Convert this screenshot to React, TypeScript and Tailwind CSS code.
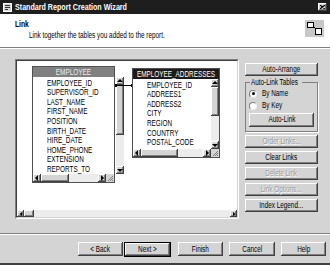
import type { ReactNode } from "react";

const raised =
  "shadow-[inset_-1px_-1px_#404040,inset_1px_1px_#ffffff,inset_-2px_-2px_#808080]";

// the screenshot's system font is narrow, so text is squeezed horizontally
const T = ({ children, left }: { children: ReactNode; left?: boolean }) => (
  <span
    className={`inline-block whitespace-nowrap scale-x-75 ${left ? "origin-left" : "origin-center"}`}
  >
    {children}
  </span>
);

const Arrow = ({ dir }: { dir: "up" | "down" | "left" | "right" }) => {
  const pts =
    dir === "up"
      ? "1,5 4,2 7,5"
      : dir === "down"
      ? "1,3 4,6 7,3"
      : dir === "left"
      ? "5,1 2,4 5,7"
      : "3,1 6,4 3,7";
  return (
    <svg width="8" height="8" viewBox="0 0 8 8">
      <polygon points={pts} fill="#000" />
    </svg>
  );
};

const SBtn = ({ dir }: { dir: "up" | "down" | "left" | "right" }) => (
  <div className={`w-[8px] h-[8px] shrink-0 bg-[#d4d4d4] flex items-center justify-center ${raised}`}>
    <Arrow dir={dir} />
  </div>
);

const Btn = ({
  label,
  disabled,
  className = "",
}: {
  label: string;
  disabled?: boolean;
  className?: string;
}) => (
  <div
    className={`h-[13px] bg-[#d4d4d4] flex items-center justify-center text-[8.5px] leading-none ${raised} ${
      disabled ? "text-[#9a9a9a] [text-shadow:1px_1px_0_#ffffff]" : "text-black"
    } ${className}`}
  >
    <T>{label}</T>
  </div>
);

const TableBox = ({
  title,
  fields,
  dark,
  thumbH,
  hThumbW,
  className,
}: {
  title: string;
  fields: string[];
  dark?: boolean;
  thumbH: number;
  hThumbW: number;
  className: string;
}) => (
  <div className={`absolute flex flex-col border border-[#505050] bg-white ${className}`}>
    <div
      className={`h-[10px] shrink-0 flex items-center justify-center text-[8.5px] leading-none ${
        dark ? "bg-[#1c1c1c] text-white" : "bg-[#808080] text-[#eeeeee]"
      }`}
    >
      <T>{title}</T>
    </div>
    <div className="flex-1 flex min-h-0">
      <div className="flex-1 flex flex-col pl-[14px] pt-[1px]">
        {fields.map((f) => (
          <div key={f} className="h-[9.6px] flex items-center text-[8.5px] leading-none text-black">
            <T left>{f}</T>
          </div>
        ))}
      </div>
      <div className="w-[8px] flex flex-col bg-[#ececec]">
        <SBtn dir="up" />
        <div className={`bg-[#d4d4d4] ${raised}`} style={{ height: thumbH }} />
        <div className="flex-1" />
        <SBtn dir="down" />
      </div>
    </div>
    <div className="h-[8px] shrink-0 flex bg-[#ececec]">
      <SBtn dir="left" />
      <div className={`bg-[#d4d4d4] ${raised}`} style={{ width: hThumbW }} />
      <div className="flex-1" />
      <SBtn dir="right" />
      <div className="w-[8px] bg-[#d4d4d4] flex items-end justify-end">
        <svg width="7" height="7" viewBox="0 0 7 7">
          <path d="M6 1 L1 6 M6 3 L3 6 M6 5 L5 6" stroke="#808080" strokeWidth="1" />
        </svg>
      </div>
    </div>
  </div>
);

const Radio = ({ label, on }: { label: string; on?: boolean }) => (
  <div className="flex items-center h-[12px] text-[8.5px] leading-none">
    <div className="w-[8px] h-[8px] rounded-full bg-white border border-t-[#808080] border-l-[#808080] border-r-[#eeeeee] border-b-[#eeeeee] flex items-center justify-center">
      {on && <div className="w-[3px] h-[3px] rounded-full bg-black" />}
    </div>
    <span className="ml-[5px]">
      <T left>{label}</T>
    </span>
  </div>
);

export default function App() {
  return (
    <div className="w-[330px] h-[265px] bg-[#d4d4d4] flex flex-col font-['Liberation_Sans',Arial,sans-serif] text-black border-b-2 border-b-[#404040] overflow-hidden">
      {/* title bar */}
      <div className="h-[14px] shrink-0 bg-[#1e1e1e] flex items-center pl-[3px] pr-[3px]">
        <svg width="9" height="9" viewBox="0 0 9 9">
          <rect x="0.5" y="0.5" width="8" height="8" fill="#d8d8d8" stroke="#ffffff" />
          <rect x="2" y="2" width="5" height="1" fill="#333" />
          <rect x="2" y="4" width="5" height="1" fill="#333" />
          <rect x="2" y="6" width="3" height="1" fill="#333" />
        </svg>
        <span className="ml-[3px] text-white font-bold text-[9.5px] leading-none">
          <T left>Standard Report Creation Wizard</T>
        </span>
        <div className={`ml-auto w-[9px] h-[8px] bg-[#d4d4d4] flex items-center justify-center ${raised}`}>
          <svg width="5" height="4" viewBox="0 0 5 4">
            <path d="M0 0 L5 4 M5 0 L0 4" stroke="#000" strokeWidth="1.2" />
          </svg>
        </div>
      </div>

      {/* header */}
      <div className="h-[33px] shrink-0 bg-white flex pl-[15px] pr-[6px]">
        <div className="flex flex-col pt-[5px]">
          <span className="font-bold text-[9px] leading-[10px]">
            <T left>Link</T>
          </span>
          <span className="pl-[14px] text-[8.5px] leading-[10px] mt-[1px]">
            <T left>Link together the tables you added to the report.</T>
          </span>
        </div>
        <div className="ml-auto mt-[6px] w-[19px] h-[17px] bg-[#c8c8c8]">
          <svg width="19" height="17" viewBox="0 0 19 17">
            <rect x="2.5" y="2.5" width="6" height="5" fill="#fff" stroke="#000" />
            <rect x="10.5" y="8.5" width="6" height="6" fill="#fff" stroke="#000" />
            <path d="M8.5 6.5 L11 9" stroke="#000" />
          </svg>
        </div>
      </div>
      <div className="h-px bg-[#808080] shrink-0" />
      <div className="h-px bg-white shrink-0" />

      {/* body */}
      <div className="h-[184px] shrink-0 flex pl-[15px] pt-[10px]">
        <div className="w-[224px] h-[160px] border border-t-[#808080] border-l-[#808080] border-r-white border-b-white">
          <div className="w-full h-full border border-t-[#404040] border-l-[#404040] border-r-[#d4d4d4] border-b-[#d4d4d4] bg-white flex flex-col">
            <div className="flex-1 relative">
              <TableBox
                className="left-[15px] top-[5px] w-[83px] h-[117px]"
                title="EMPLOYEE"
                thumbH={50}
                hThumbW={28}
                fields={[
                  "EMPLOYEE_ID",
                  "SUPERVISOR_ID",
                  "LAST_NAME",
                  "FIRST_NAME",
                  "POSITION",
                  "BIRTH_DATE",
                  "HIRE_DATE",
                  "HOME_PHONE",
                  "EXTENSION",
                  "REPORTS_TO",
                ]}
              />
              <div className="absolute left-[98px] top-[24px] w-[18px] h-px bg-black" />
              <div className="absolute left-[98px] top-[23px] w-[2px] h-[3px] bg-black" />
              <div className="absolute left-[114px] top-[23px] w-[2px] h-[3px] bg-black" />
              <TableBox
                className="left-[115px] top-[7px] w-[88px] h-[90px]"
                title="EMPLOYEE_ADDRESSES"
                dark
                thumbH={29}
                hThumbW={37}
                fields={[
                  "EMPLOYEE_ID",
                  "ADDREES1",
                  "ADDRESS2",
                  "CITY",
                  "REGION",
                  "COUNTRY",
                  "POSTAL_CODE",
                ]}
              />
            </div>
            <div className="h-[7px] shrink-0 flex bg-[#ececec]">
              <div className={`w-[7px] bg-[#d4d4d4] flex items-center justify-center ${raised}`}>
                <svg width="6" height="6" viewBox="0 0 6 6">
                  <polygon points="4,1 1.5,3 4,5" fill="#000" />
                </svg>
              </div>
              <div className={`w-[10px] bg-[#d4d4d4] ${raised}`} />
              <div className="flex-1" />
              <div className={`w-[7px] bg-[#d4d4d4] flex items-center justify-center ${raised}`}>
                <svg width="6" height="6" viewBox="0 0 6 6">
                  <polygon points="2,1 4.5,3 2,5" fill="#000" />
                </svg>
              </div>
            </div>
          </div>
        </div>

        <div className="ml-[6px] mt-[4px] w-[73px] flex flex-col gap-[3px]">
          <Btn label="Auto-Arrange" />
          <fieldset className="border border-[#808080] shadow-[1px_1px_0_#ffffff] pl-[3px] pr-[3px] pb-[4px] -mt-[1px]">
            <legend className="w-[52px] text-[8.5px] leading-none px-[1px] ml-[1px]">
              <T left>Auto-Link Tables</T>
            </legend>
            <div className="flex flex-col pt-[1px]">
              <Radio label="By Name" on />
              <Radio label="By Key" />
              <Btn label="Auto-Link" className="mt-[1px] h-[14px]" />
            </div>
          </fieldset>
          <Btn label="Order Links..." disabled />
          <Btn label="Clear Links" />
          <Btn label="Delete Link" disabled />
          <Btn label="Link Options..." disabled />
          <Btn label="Index Legend..." />
        </div>
      </div>

      <div className="h-px bg-[#808080] shrink-0" />
      <div className="h-px bg-white shrink-0" />

      {/* footer */}
      <div className="flex-1 flex items-start pt-[7px] pl-[78px]">
        <Btn label="< Back" className="w-[45px] h-[14px]" />
        <div className="ml-[1px] border border-black">
          <Btn label="Next >" className="w-[45px] h-[12px]" />
        </div>
        <Btn label="Finish" className="ml-[7px] w-[45px] h-[14px]" />
        <Btn label="Cancel" className="ml-[6px] w-[46px] h-[14px]" />
        <Btn label="Help" className="ml-[6px] w-[45px] h-[14px]" />
      </div>
    </div>
  );
}
